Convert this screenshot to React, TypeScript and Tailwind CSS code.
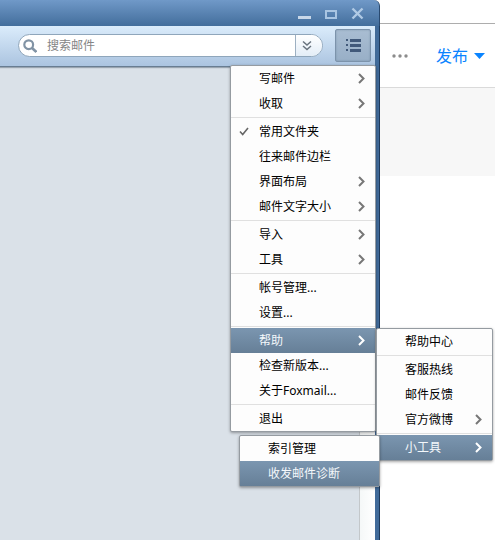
import { type ReactNode } from 'react'
import clsx from 'clsx'

type MenuEntry = {
	label: string
	checked?: boolean
	active?: boolean
	arrow?: boolean
	submenu?: ReactNode
}

const helpTools: MenuEntry[][] = [
	[{ label: '索引管理' }, { label: '收发邮件诊断', active: true }],
]

const Chevron = () => (
	<svg width="7" height="11" viewBox="0 0 7 11" fill="none" aria-hidden="true">
		<path d="M1 1l4.5 4.5L1 10" stroke="currentColor" strokeWidth="2" />
	</svg>
)

const Check = () => (
	<svg width="10" height="9" viewBox="0 0 10 9" fill="none" aria-hidden="true">
		<path d="M1 4.5l2.7 3L9 1" stroke="currentColor" strokeWidth="1.6" />
	</svg>
)

const MenuItem = ({ label, checked, active, arrow, submenu }: MenuEntry) => (
	<div className="relative">
		<button
			type="button"
			role="menuitem"
			className={clsx(
				'flex h-[25px] w-full items-center pr-2.5 text-left',
				active
					? 'bg-linear-to-b from-[#7b96b0] to-[#667f97] text-[#f4f8fb]'
					: 'text-black'
			)}
		>
			<span className="flex w-7 shrink-0 pl-2 text-[#666]">
				{checked && <Check />}
			</span>
			<span className="flex-1 whitespace-nowrap">{label}</span>
			{arrow && (
				<span className={active ? 'text-white' : 'text-[#777]'}>
					<Chevron />
				</span>
			)}
		</button>
		{submenu}
	</div>
)

const Menu = ({
	groups,
	label,
	className,
}: {
	groups: MenuEntry[][]
	label: string
	className: string
}) => (
	<div
		role="menu"
		aria-label={label}
		className={clsx(
			'absolute rounded-xs border border-[#959ba1] bg-[#fdfdfd] text-xs shadow-[0_1px_3px_rgba(0,0,0,0.35)]',
			className
		)}
	>
		{groups.map((group, i) => (
			<div key={i}>
				{i > 0 && <hr className="my-px border-[#e0e0e0]" />}
				{group.map((entry) => (
					<MenuItem key={entry.label} {...entry} />
				))}
			</div>
		))}
	</div>
)

const helpGroups: MenuEntry[][] = [
	[{ label: '帮助中心' }],
	[
		{ label: '客服热线' },
		{ label: '邮件反馈' },
		{ label: '官方微博', arrow: true },
	],
	[
		{
			label: '小工具',
			arrow: true,
			active: true,
			submenu: (
				<Menu
					groups={helpTools}
					label="小工具"
					className="top-0 right-full z-20 -mr-[3px] w-[141px]"
				/>
			),
		},
	],
]

const mainGroups: MenuEntry[][] = [
	[
		{ label: '写邮件', arrow: true },
		{ label: '收取', arrow: true },
	],
	[
		{ label: '常用文件夹', checked: true },
		{ label: '往来邮件边栏' },
		{ label: '界面布局', arrow: true },
		{ label: '邮件文字大小', arrow: true },
	],
	[
		{ label: '导入', arrow: true },
		{ label: '工具', arrow: true },
	],
	[{ label: '帐号管理...' }, { label: '设置...' }],
	[
		{
			label: '帮助',
			arrow: true,
			active: true,
			submenu: (
				<Menu
					groups={helpGroups}
					label="帮助"
					className="top-0 left-full ml-px w-[117px]"
				/>
			),
		},
		{ label: '检查新版本...' },
		{ label: '关于Foxmail...' },
	],
	[{ label: '退出' }],
]

const TitleBar = () => (
	<header className="flex h-[26px] items-end justify-end gap-3 rounded-tr-md border-r border-[#2a4a70] bg-linear-to-b from-[#7099c8] to-[#436e9c] pr-3.5 pb-1.5">
		<button type="button" aria-label="最小化">
			<svg width="15" height="13" viewBox="0 0 15 13" fill="#c8d7e8">
				<path d="M0 9h13v3H0z" />
			</svg>
		</button>
		<button type="button" aria-label="最大化">
			<svg width="14" height="13" viewBox="0 0 14 13" fill="none">
				<path d="M1 4h10v7H1z" stroke="#a9c5e2" strokeWidth="2" />
			</svg>
		</button>
		<button type="button" aria-label="关闭">
			<svg width="14" height="13" viewBox="0 0 14 13" fill="none">
				<path
					d="M1.5 1.5l10 10M11.5 1.5l-10 10"
					stroke="#b0cae5"
					strokeWidth="2.4"
				/>
			</svg>
		</button>
	</header>
)

const SearchBox = () => (
	<div className="flex h-[23px] min-w-0 flex-1 overflow-hidden rounded-full border border-[#8fa6bb] bg-white">
		<label htmlFor="mail-search" className="flex items-center pl-1">
			<svg width="14" height="14" viewBox="0 0 14 14" fill="none">
				<title>搜索</title>
				<circle cx="5.7" cy="5.7" r="4.4" stroke="#8193a5" strokeWidth="2.2" />
				<path d="M9 9l4.4 4" stroke="#8193a5" strokeWidth="2.6" />
			</svg>
		</label>
		<input
			id="mail-search"
			type="text"
			placeholder="搜索邮件"
			className="min-w-0 flex-1 pl-2.5 text-xs outline-none placeholder:text-[#858585]"
		/>
		<button
			type="button"
			aria-label="搜索选项"
			className="flex w-[27px] items-center justify-center border-l border-[#9db0c2] bg-linear-to-b from-white to-[#e3edf7] pr-1"
		>
			<svg width="10" height="11" viewBox="0 0 10 11" fill="none">
				<path
					d="M1 1.5l4 3.5 4-3.5M1 6l4 3.5L9 6"
					stroke="#68737e"
					strokeWidth="1.5"
				/>
			</svg>
		</button>
	</div>
)

const Toolbar = () => (
	<div className="relative z-10 flex h-[41px] items-center gap-3 border-b border-[#687d92] bg-linear-to-b from-[#dbecfb] to-[#abc4e0] pr-1 pb-px pl-[18px] shadow-[0_1px_1px_rgba(90,105,120,0.5)]">
		<SearchBox />
		<button
			type="button"
			aria-label="主菜单"
			className="flex h-[33px] w-9 items-center justify-center rounded-xs border border-[#7c93ab] bg-linear-to-b from-[#a9bdd2] to-[#98afc7] shadow-[inset_0_0_2px_rgba(70,95,125,0.4)]"
		>
			<svg width="15" height="13" viewBox="0 0 15 13" fill="#41597a">
				<path d="M0 0h2v2H0zM4 0h11v3H4zM0 5h2v2H0zM4 5h11v3H4zM0 10h2v2H0zM4 10h11v3H4z" />
			</svg>
		</button>
		<Menu
			groups={mainGroups}
			label="主菜单"
			className="top-[39px] -right-px w-[146px]"
		/>
	</div>
)

const MailWindow = () => (
	<section className="relative z-10 flex min-w-0 flex-1 flex-col">
		<TitleBar />
		<div className="flex flex-1 flex-col border-r border-[#1f3a5b] bg-[#416b9a] pr-1">
			<Toolbar />
			<div className="flex flex-1 bg-[#dae1e8]">
				<div className="flex-1" />
				<div className="w-4 border-l border-[#c3c7ca] bg-linear-to-r from-[#f5f8f8] to-white" />
			</div>
		</div>
	</section>
)

const EditorPage = () => (
	<section className="flex w-[115px] shrink-0 flex-col bg-white">
		<div className="h-6 border-b border-[#adadad]" />
		<div className="flex h-16 items-center gap-7 border-b border-[#dadada] pl-3">
			<button type="button" aria-label="更多">
				<svg width="16" height="4" viewBox="0 0 16 4" fill="#8c8c8c">
					<circle cx="2" cy="2" r="1.7" />
					<circle cx="8" cy="2" r="1.7" />
					<circle cx="14" cy="2" r="1.7" />
				</svg>
			</button>
			<button
				type="button"
				className="flex items-center gap-1.5 text-base whitespace-nowrap text-[#0a84ff]"
			>
				发布
				<svg width="11" height="6" viewBox="0 0 11 6" fill="#0a84ff">
					<path d="M0 0h11L5.5 6z" />
				</svg>
			</button>
		</div>
		<div className="h-22 bg-[#f7f7f7]" />
	</section>
)

export default function App() {
	return (
		<main className="flex min-h-screen overflow-hidden bg-white font-['Noto_Sans','Noto_Sans_CJK_SC',sans-serif]">
			<MailWindow />
			<EditorPage />
		</main>
	)
}
